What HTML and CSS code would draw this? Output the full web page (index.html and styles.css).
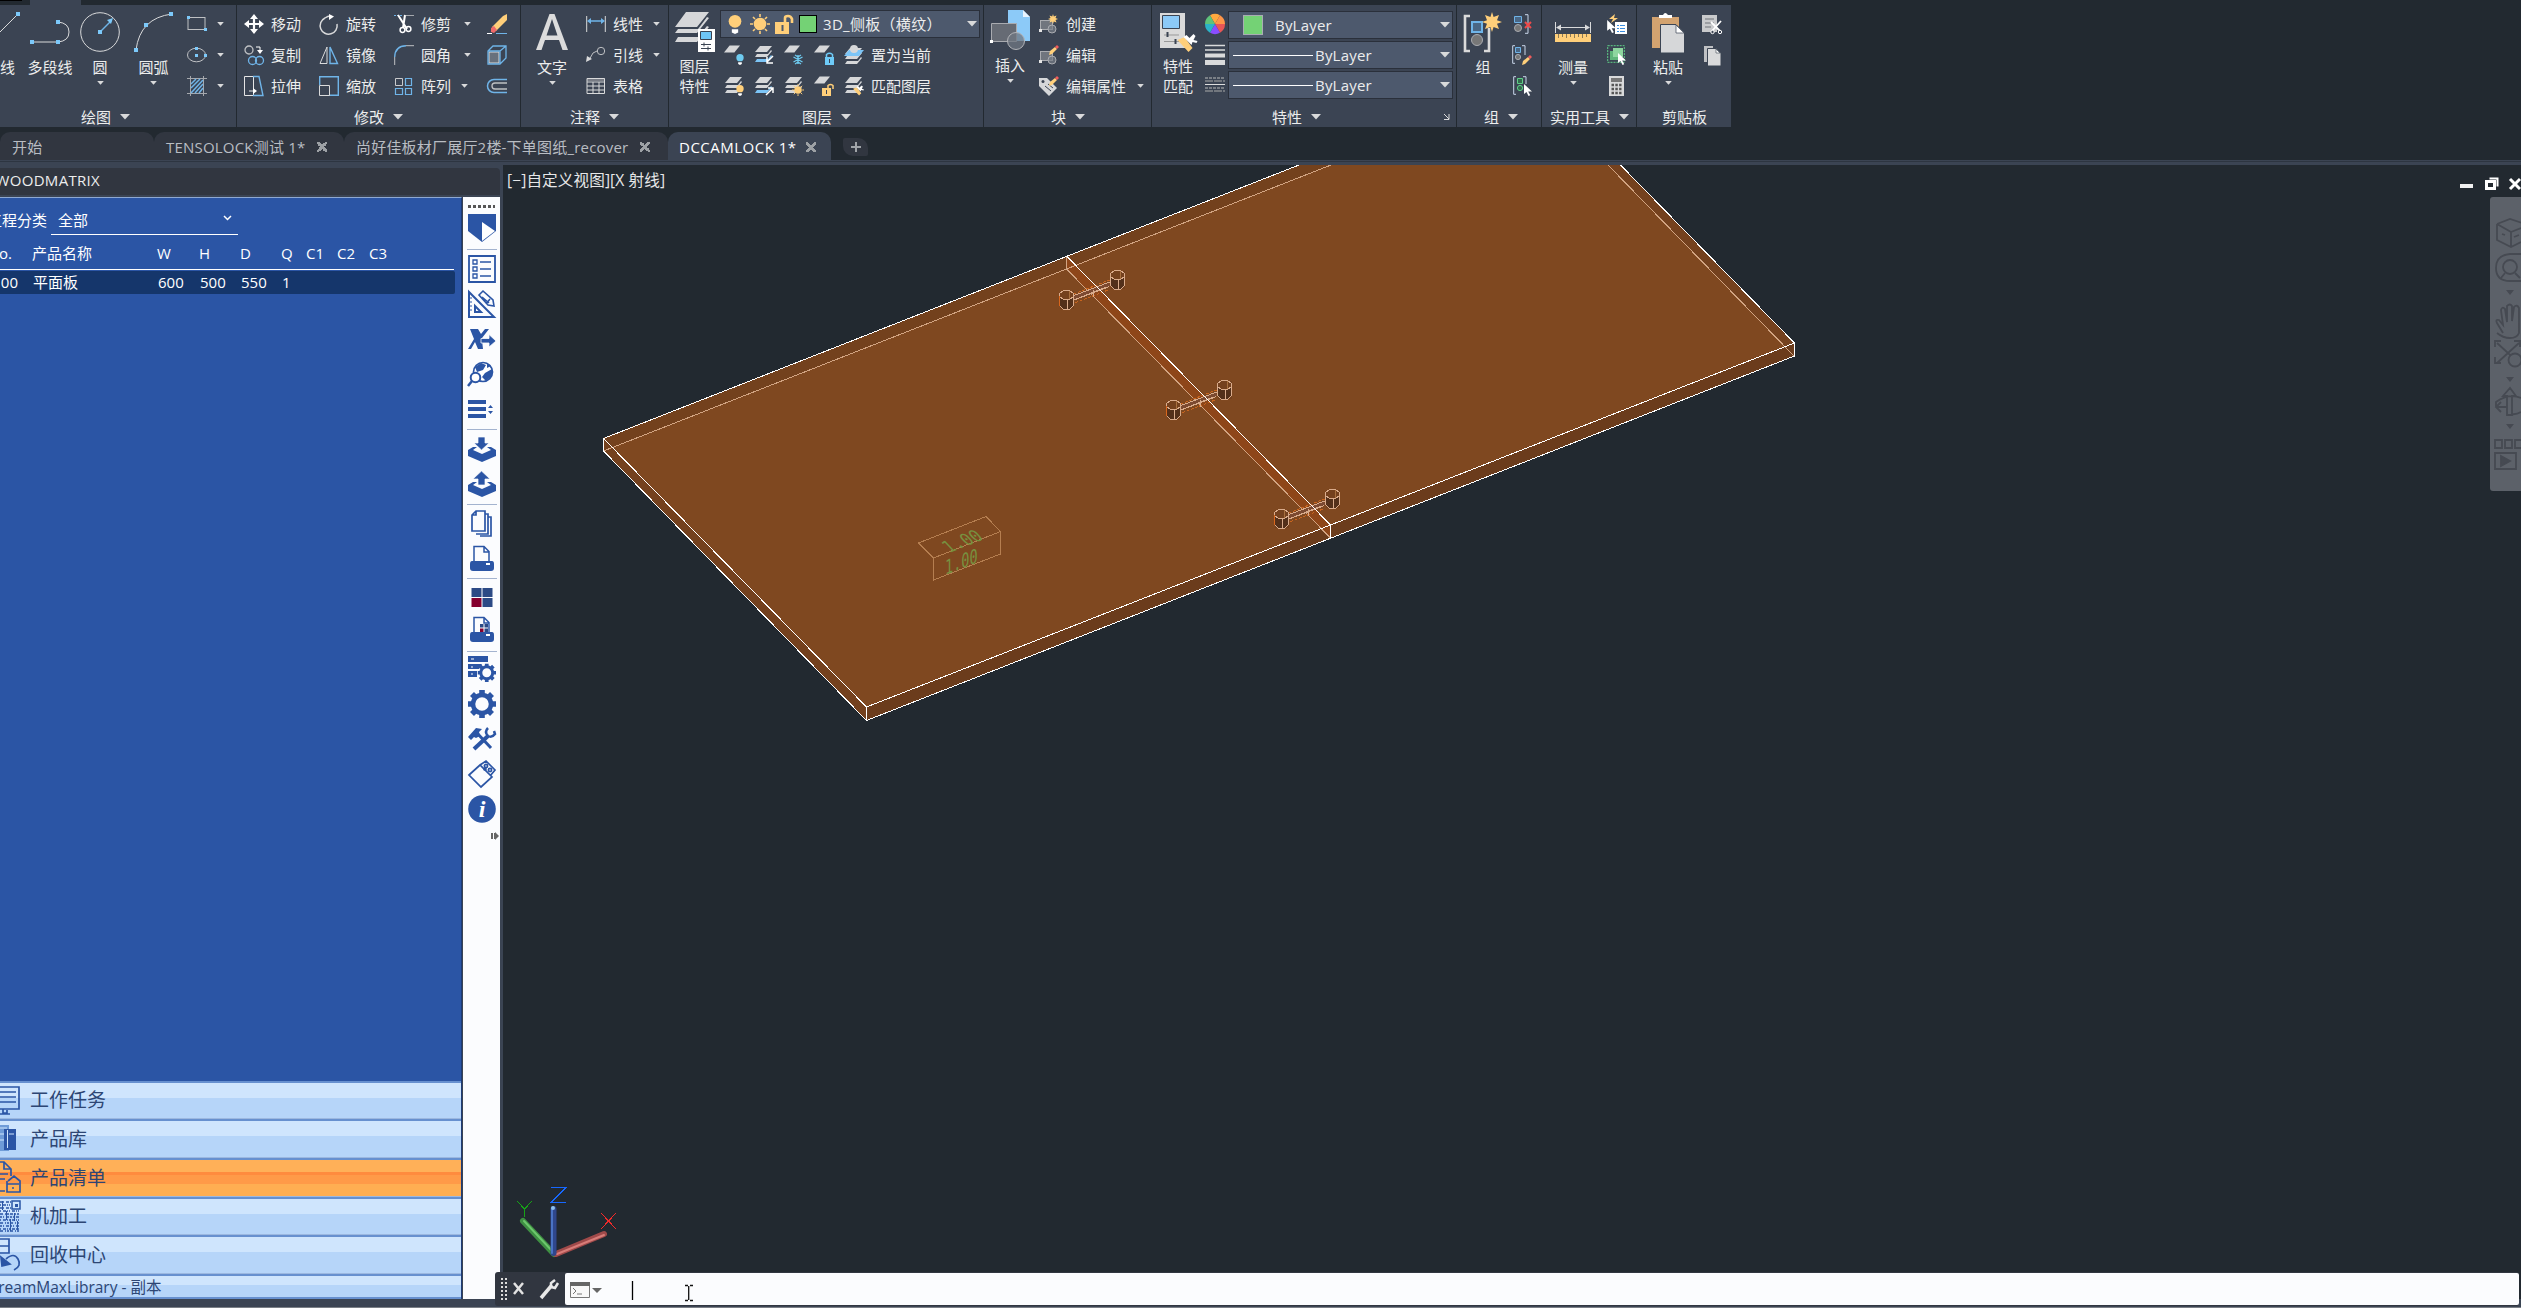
FILE: index.html
```html
<!DOCTYPE html>
<html lang="zh-CN">
<head>
<meta charset="utf-8">
<title>DCCAMLOCK 1*</title>
<link rel="stylesheet" href="styles.css">
</head>
<body>
<svg class="defs" width="0" height="0">
  <defs>
    <symbol id="sheet" viewBox="0 0 20 9"><path d="M7 0h13l-7 9H0z" fill="#d6d7d9"/></symbol>
    <symbol id="stack" viewBox="0 0 20 20"><path d="M6 1h12l-5 6H1z" fill="#d6d7d9"/><path d="M1 12l2-3h11l3-4 1 1-5 6zM1 17l2-3h11l3-4 1 1-5 6z" fill="#d6d7d9"/></symbol>
    <symbol id="stackblue" viewBox="0 0 20 20"><path d="M6 1h12l-5 6H1z" fill="#d6d7d9"/><path d="M1 12l2-3h11l3-4 1 1-5 6z" fill="#d6d7d9"/><path d="M1 17l2-3h11l3-4 1 1-5 6z" fill="#7cc5f7"/></symbol>
    <symbol id="bulb" viewBox="0 0 8 12"><circle cx="4" cy="4" r="4"/><path d="M2 9h4v2l-2 1-2-1z" fill="#fff"/></symbol>
    <symbol id="sun" viewBox="0 0 20 20"><circle cx="10" cy="10" r="6.3" fill="#ffcf7a"/><path d="M10 0v3M10 17v3M0 10h3M17 10h3M3 3l2 2M15 15l2 2M3 17l2-2M15 5l2-2" stroke="#ffcf7a" stroke-width="1.6"/></symbol>
    <symbol id="star" viewBox="0 0 20 20"><path d="M10 0l1.600 5L17 3l-2 5.200 5 1.800-5 1.800 2 5.200-5.400-2L10 20l-1.600-5L3 17l2-5.200L0 10l5-1.800L3 3l5.400 2z" fill="#ffcf7a"/></symbol>
    <symbol id="pencil" viewBox="0 0 10 10"><path d="M0 10l1-4 5-4 2 2-5 5z" fill="#ffcf7a"/><path d="M6 2l2-2 2 2-2 2z" fill="#ef5b5b"/></symbol>
    <symbol id="cursor" viewBox="0 0 8 12"><path d="M0 0v10l2.500-2 2 4 1.700-.8-2-3.700H8z" fill="#fff"/></symbol>
    <symbol id="shapes" viewBox="0 0 20 20"><rect x="1.500" y="6.500" width="12" height="9" fill="#70757e" stroke="#a9abb0"/><circle cx="13" cy="15" r="4" fill="#777d87" fill-opacity=".7" stroke="#a9abb0"/><path d="M0 15h3v3H0z" fill="#e4e4e4"/></symbol>
    <symbol id="brush" viewBox="0 0 20 18"><path d="M0 6l7-3 8 11-4 4z" fill="#ffcf7a"/><path d="M6 3l3-2 3 3 4-4 2 2-2 4 4 1-1 2-4-1-1 3z" fill="#fff"/></symbol>
    <symbol id="gear" viewBox="0 0 28 28"><circle cx="14" cy="14" r="9" fill="none" stroke="#2b55a5" stroke-width="4.500"/><g stroke="#2b55a5" stroke-width="5.600"><path d="M14 0v5M14 23v5M0 14h5M23 14h5M4 4l4 4M20 20l4 4M4 24l4-4M20 8l4-4"/></g></symbol>
    <symbol id="down" viewBox="0 0 10 6"><path d="M0 0h10L5 5.500z" fill="#d9dadb"/></symbol>
    <symbol id="printer" viewBox="0 0 28 28"><path d="M6 16V1.500h10l5 5V16M16 2v5h5" fill="none" stroke="#2b55a5" stroke-width="1.500"/><path d="M4 16h20q2 0 2 3v4q0 3-3 3H5q-3 0-3-3v-4q0-3 2-3z" fill="#2b55a5"/><path d="M18 18h4v2h-4z" fill="#fff"/></symbol>
    <symbol id="tray" viewBox="0 0 28 28"><path d="M0 15l5-3h4l-4 3 9 4 9-4-4-3h4l5 3v6l-14 6-14-6z" fill="#2b55a5"/></symbol>
    <symbol id="dowel" viewBox="0 -2 70 44">
      <path d="M15 22.500l36-14M17 31l34-13" stroke="#c8641e" stroke-width="1" stroke-dasharray="3 1.500"/>
      <path d="M13 27.500l38-15" stroke="#7c4a31" stroke-width="4"/>
      <path d="M13 25l38-14.500M13 29.500l38-14.500M34.500 18v7M18 27.500l30-12" stroke="#d9ab8b" stroke-width="1"/>
      <g id="cyl"><path d="M1 19h14v18H1z" fill="#74411e"/><path d="M1 26l4 2h6l4-2v8l-4 4H5l-4-3z" fill="#53301a"/><path d="M1 22l4-3h6l4 3v12l-4 4H5l-4-4zM1 25l4 3h6l4-3M8.500 28v10" fill="none" stroke="#d9ab8b"/><path d="M10.500 19v8" stroke="#a8703f"/></g>
      <use href="#cyl" x="51" y="-20"/><path d="M.5 24v10" stroke="#d9661c"/>
    </symbol>
  </defs>
</svg>

<div class="app">
  <header class="strip"><span class="strip-dark"></span><span class="strip-tab"></span></header>

  <nav class="ribbon">
    <section class="panel draw">
      <div class="tools">
        <div class="big b-line"><svg width="40" height="40"><path d="M6 34L38 2" stroke="#d9dadb"/><path d="M36 0h4v4h-4z" fill="#7cc9fa"/></svg><span>直线</span></div>
        <div class="big b-poly"><svg width="40" height="40"><path d="M2 30h26q11-1 11-10T28 10" fill="none" stroke="#d9dadb"/><path d="M0 28h4v4H0zM26 28h4v4h-4zM26 8h4v4h-4z" fill="#7cc9fa"/></svg><span>多段线</span></div>
        <div class="big b-circle"><svg width="40" height="40"><circle cx="20" cy="20" r="19.300" fill="none" stroke="#d9dadb"/><path d="M20 20l11-11" stroke="#6fb4e8" stroke-width="1.500"/><path d="M27 8l6-2-2 6zM18 18h4v4h-4z" fill="#7cc9fa"/></svg><span>圆</span><svg class="arr" width="7" height="4"><use href="#down"/></svg></div>
        <div class="big b-arc"><svg width="40" height="40"><path d="M2 38Q6 6 38 2" fill="none" stroke="#d9dadb"/><path d="M0 36h4v4H0zM10 11h4v4h-4zM35 0h4v4h-4z" fill="#7cc9fa"/></svg><span>圆弧</span><svg class="arr" width="7" height="4"><use href="#down"/></svg></div>
        <div class="col c-small">
          <div class="tool"><svg width="20" height="20"><rect x="1" y="3.500" width="17" height="12" fill="none" stroke="#bfc1c4"/><path d="M0 2h3v3H0zM17 14h3v3h-3z" fill="#7cc9fa"/></svg><svg class="arr" width="7" height="4"><use href="#down"/></svg></div>
          <div class="tool"><svg width="20" height="20"><ellipse cx="9.500" cy="10" rx="9" ry="6.800" fill="none" stroke="#bfc1c4"/><path d="M8 2h3v3H8zM8 9h3v3H8zM17 9h3v3h-3z" fill="#7cc9fa"/></svg><svg class="arr" width="7" height="4"><use href="#down"/></svg></div>
          <div class="tool"><svg width="20" height="20"><path d="M3.500 0v20M16.500 0v20M0 2.500h20M0 17.500h20" stroke="#a5a8ad"/><path d="M4 8l5-5M4 12l9-9M4 17L16 4M8 17l8-9M12 17l4-5" stroke="#6fb4e8" stroke-width="1.500"/></svg><svg class="arr" width="7" height="4"><use href="#down"/></svg></div>
        </div>
      </div>
      <div class="title">绘图<svg width="10" height="6"><use href="#down"/></svg></div>
    </section>

    <section class="panel modify">
      <div class="tools">
        <div class="col w75">
          <div class="tool"><svg width="20" height="20"><path d="M10 2v16M2 10h16" stroke="#fff" stroke-width="2.200"/><path d="M10 0l4 5H6zM10 20l4-5H6zM0 10l5-4v8zM20 10l-5-4v8z" fill="#fff"/></svg>移动</div>
          <div class="tool"><svg width="20" height="20"><circle cx="5" cy="5" r="4" fill="none" stroke="#bfc1c4" stroke-width="1.300"/><path d="M12 2h4v4" fill="none" stroke="#fff"/><path d="M13 5h6l-3 4z" fill="#fff"/><circle cx="8.500" cy="15.500" r="4" fill="none" stroke="#6fb4e8" stroke-width="1.300"/><circle cx="15.500" cy="15.500" r="4" fill="none" stroke="#6fb4e8" stroke-width="1.300"/></svg>复制</div>
          <div class="tool"><svg width="20" height="20"><path d="M9.500 .5h-9v19h9zM5 15h5" fill="none" stroke="#e4e4e4"/><path d="M9 12l4 3-4 3z" fill="#fff"/><path d="M9 .5h6l4 19H9" fill="none" stroke="#6fb4e8" stroke-width="1.400"/></svg>拉伸</div>
        </div>
        <div class="col w75">
          <div class="tool"><svg width="20" height="20"><path d="M6 4a8.500 8.500 0 1 0 12 6M6 4q3-2 5-2" fill="none" stroke="#d9dadb" stroke-width="1.500"/><path d="M10 0l5 2.500L10 6z" fill="#fff"/></svg>旋转</div>
          <div class="tool"><svg width="20" height="20"><path d="M8 2v16.500H1z" fill="none" stroke="#d9dadb"/><path d="M11 2v16.500h7.500z" fill="none" stroke="#6fb4e8" stroke-width="1.400"/></svg>镜像</div>
          <div class="tool"><svg width="20" height="20"><path d="M.7 9V.7h18.600v18.600H10" fill="none" stroke="#6fb4e8" stroke-width="1.400"/><path d="M.5 9.500h10v10H.5z" fill="none" stroke="#d9dadb"/></svg>缩放</div>
        </div>
        <div class="col w93">
          <div class="tool"><svg width="20" height="20"><path d="M0 1.500h9" stroke="#6fb4e8" stroke-dasharray="2 1"/><path d="M12 1.500h8" stroke="#a5a8ad"/><path d="M4 1l9 14M11 1L9 14" stroke="#fff" stroke-width="2"/><circle cx="8.500" cy="16" r="2.400" fill="none" stroke="#fff" stroke-width="1.500"/><circle cx="14.500" cy="15" r="2.400" fill="none" stroke="#fff" stroke-width="1.500"/></svg>修剪<svg class="arr gap13" width="7" height="4"><use href="#down"/></svg></div>
          <div class="tool"><svg width="20" height="20"><path d="M.7 12Q1 1 12 .7" fill="none" stroke="#6fb4e8" stroke-width="1.400"/><path d="M.7 12v8M12 .7h8" stroke="#bfc1c4"/></svg>圆角<svg class="arr gap13" width="7" height="4"><use href="#down"/></svg></div>
          <div class="tool"><svg width="20" height="20" fill="none"><path d="M1.500 2.500h7v7h-7z" stroke="#c9cacc"/><path d="M11.500 2.500h6v7h-6zM1.500 12.500h7v6h-7zM11.500 12.500h6v6h-6z" stroke="#6fb4e8" stroke-width="1.200"/></svg>阵列<svg class="arr gap9" width="7" height="4"><use href="#down"/></svg></div>
        </div>
        <div class="col">
          <div class="tool"><svg width="20" height="20"><path d="M5 13L16 2l4-2v6L9 17z" fill="#ffcf7a"/><path d="M4 14l3-2 3 4-3 3-3-1z" fill="#ef6a6a"/><path d="M0 19.500h5" stroke="#fff"/><path d="M9 19.500h11" stroke="#6fb4e8"/></svg></div>
          <div class="tool"><svg width="20" height="20"><path d="M2 7h10v11H2z" fill="#68717d" stroke="#d9dadb"/><path d="M1 6l5-5h13v12l-6 6H1zM1 6h12v13M13 6l6-5" fill="none" stroke="#6fb4e8" stroke-width="1.300"/></svg></div>
          <div class="tool"><svg width="20" height="20" fill="none"><path d="M20 3.500H7a6.500 6.500 0 0 0 0 13h13" stroke="#6fb4e8" stroke-width="1.500"/><path d="M20 7H8a3 3 0 0 0 0 6h12" stroke="#bfc1c4" stroke-width="1.300"/></svg></div>
        </div>
      </div>
      <div class="title">修改<svg width="10" height="6"><use href="#down"/></svg></div>
    </section>

    <section class="panel annotate">
      <div class="tools">
        <div class="big w62"><svg width="40" height="40"><path d="M4 38L17.500 2h5L36 38h-5.500l-3.500-10H13L9.500 38zM14.500 23.500h11L20 7z" fill="#dcdcdc"/></svg><span>文字</span><svg class="arr" width="7" height="4"><use href="#down"/></svg></div>
        <div class="col ml3">
          <div class="tool"><svg width="20" height="20"><path d="M.7 2v16M19.300 2v16" stroke="#d9dadb"/><path d="M3 7h14" stroke="#6fb4e8" stroke-width="1.500"/><path d="M1 7l4-3v6zM19 7l-4-3v6z" fill="#6fb4e8"/></svg>线性<svg class="arr gap10" width="7" height="4"><use href="#down"/></svg></div>
          <div class="tool"><svg width="20" height="20"><circle cx="15" cy="6" r="3.700" fill="none" stroke="#bfc1c4"/><path d="M11 6L7 8 3 15" fill="none" stroke="#bfc1c4"/><path d="M0 17l1-6 5 3z" fill="#d9dadb"/></svg>引线<svg class="arr gap10" width="7" height="4"><use href="#down"/></svg></div>
          <div class="tool"><svg width="20" height="20"><path d="M1 2h18v3H1z" fill="#777b84"/><path d="M1 2.500h17.500v15H1zM1 6h18M1 10h18M1 14h18M7 6v12M13 6v12" fill="none" stroke="#d9dadb"/></svg>表格</div>
        </div>
      </div>
      <div class="title">注释<svg width="10" height="6"><use href="#down"/></svg></div>
    </section>

    <section class="panel layers">
      <div class="tools">
        <div class="big two w50"><svg width="40" height="40"><path d="M11 0h23L22 15H0zM3 17l-3 4h22l12-15-2-1-9 12zM3 25l-3 5h22l12-15-2-1-9 11z" fill="#d6d7d9"/><path d="M23 17h17v23H23z" fill="#fff"/><path d="M25.500 19.500h11v8h-11z" fill="#6ec6f7" stroke="#3b4453"/><path d="M26 32.500h10M26 36.500h10M29 30.500v4M33 34.500v4" stroke="#3b4453"/></svg><span>图层<br>特性</span></div>
        <div class="layer-main">
          <div class="combo layer-combo">
            <svg class="i-bulb" width="14" height="19" fill="#ffcf7a"><use href="#bulb"/></svg>
            <svg class="i-sun" width="20" height="20"><use href="#sun"/></svg>
            <svg class="i-lock" width="18" height="19"><path d="M0 7h14v12H0z" fill="#ffcf7a"/><path d="M10 8V3q0-2 3-2t4 3v4" fill="none" stroke="#ffcf7a" stroke-width="2.600"/><path d="M6.500 10h2v6h-2z" fill="#4d596d"/></svg>
            <i class="swatch"></i><span class="layer-name">3D_侧板（横纹）</span><svg class="end" width="10" height="6"><use href="#down"/></svg>
          </div>
          <div class="tool layer-row">
            <svg width="20" height="20"><use href="#sheet" width="16" height="8"/><g fill="#6ecbf0"><use href="#bulb" x="12" y="9" width="8" height="11"/></g></svg>
            <svg width="20" height="20"><use href="#stackblue"/><path d="M19 11l-6 6m0-5v6h6" stroke="#fff" stroke-width="1.500" fill="none"/></svg>
            <svg width="20" height="20"><use href="#sheet" width="16" height="8"/><path d="M14 10v9M9.500 12l9 5M9.500 17l9-5M11 10l3 2 3-2M11 19l3-2 3 2" stroke="#6ecbf0" fill="none" stroke-width="1.300"/></svg>
            <svg width="20" height="20"><use href="#sheet" width="16" height="8"/><path d="M11 12h9v8h-9z" fill="#6ecbf8"/><path d="M12.500 12V9.500q3-2.500 6 0V12" fill="none" stroke="#6ecbf8" stroke-width="1.500"/><path d="M15 14h1v4h-1z" fill="#3b4453"/></svg>
            <svg width="20" height="20"><use href="#stack" y="2"/><path d="M5 5h15l-5 6H0z" fill="#7cc5f7"/><circle cx="10" cy="4" r="4" fill="#d6d7d9"/></svg>
            <span>置为当前</span>
          </div>
          <div class="tool layer-row">
            <svg width="20" height="20"><use href="#stack"/><g fill="#ffcf7a"><use href="#bulb" x="12" y="9" width="8" height="11"/></g></svg>
            <svg width="20" height="20"><use href="#stackblue"/><path d="M12 19l7-7m-5 0h5v5" stroke="#fff" stroke-width="1.500" fill="none"/></svg>
            <svg width="20" height="20"><use href="#stack"/><use href="#sun" x="8" y="8" width="12" height="12"/></svg>
            <svg width="20" height="20"><use href="#sheet" width="16" height="8"/><path d="M8 12h9v8H8z" fill="#ffcf7a"/><path d="M14 12V9.500q2.500-2 5 0V13" fill="none" stroke="#ffcf7a" stroke-width="1.500"/><path d="M12 14h1v4h-1z" fill="#3b4453"/></svg>
            <svg width="20" height="20"><use href="#stack"/><use href="#brush" x="9" y="9" width="11" height="11"/></svg>
            <span>匹配图层</span>
          </div>
        </div>
      </div>
      <div class="title">图层<svg width="10" height="6"><use href="#down"/></svg></div>
    </section>

    <section class="panel block">
      <div class="tools">
        <div class="big up w52"><svg width="40" height="40"><path d="M18 0h15l7 7v24H18z" fill="#8ccaf8"/><path d="M33 0l7 7h-7z" fill="#e8f4ff"/><path d="M1.500 13.500h25v18h-25z" fill="#666b74" stroke="#a9abb0"/><circle cx="26" cy="31" r="8.500" fill="#707782" fill-opacity=".75" stroke="#b2b4b8"/><path d="M0 30h3v3H0z" fill="#fff"/></svg><span>插入</span><svg class="arr" width="7" height="4"><use href="#down"/></svg></div>
        <div class="col ml3">
          <div class="tool"><svg width="20" height="20"><use href="#shapes"/><use href="#star" x="9" y="0" width="10" height="10"/></svg>创建</div>
          <div class="tool"><svg width="20" height="20"><use href="#shapes"/><use href="#pencil" x="10" y="0" width="10" height="10"/></svg>编辑</div>
          <div class="tool"><svg width="20" height="20"><path d="M0 2h8l10 10-8 8L0 10z" fill="#d6d7d9"/><circle cx="4" cy="5.500" r="1.500" fill="#3b4453"/><path d="M6 10l6 5M9 8l5 4" stroke="#3b4453"/><use href="#pencil" x="10" y="0" width="10" height="10"/></svg>编辑属性<svg class="arr gap11" width="7" height="4"><use href="#down"/></svg></div>
        </div>
      </div>
      <div class="title">块<svg width="10" height="6"><use href="#down"/></svg></div>
    </section>

    <section class="panel props">
      <div class="tools">
        <div class="big two w52"><svg width="40" height="40"><path d="M2 1h25v35H2z" fill="#dadada"/><path d="M4.500 3.500h17v13h-17z" fill="#8ccaf8" stroke="#3b4453"/><path d="M6 23h15M6 29.500h15" stroke="#999"/><path d="M9.500 20v5M17.500 27v5" stroke="#3b4453" stroke-width="2"/><use href="#brush" x="19" y="22" width="21" height="18"/></svg><span>特性<br>匹配</span></div>
        <div class="col ml1">
          <div class="tool"><svg width="20" height="20" viewBox="-10 -10 20 20"><path d="M0 0L-5-8.700A10 10 0 0 1 5-8.700z" fill="#ffa83e"/><path d="M0 0L5-8.700A10 10 0 0 1 10 0z" fill="#ff9548"/><path d="M0 0h10A10 10 0 0 1 5 8.700z" fill="#e85656"/><path d="M0 0l5 8.700a10 10 0 0 1-10 0z" fill="#8a4dff"/><path d="M0 0l-5 8.700A10 10 0 0 1-10 0z" fill="#2bb3c8"/><path d="M0 0h-10A10 10 0 0 1-5-8.700z" fill="#5fc27a"/></svg></div>
          <div class="tool"><svg width="20" height="20"><path d="M0 .5h20M0 5h20" stroke="#d9dadb" stroke-width="1.500"/><path d="M0 10.500h20" stroke="#d9dadb" stroke-width="4"/><path d="M0 17.500h20" stroke="#d9dadb" stroke-width="5"/></svg></div>
          <div class="tool"><svg width="20" height="20"><path d="M0 2h20M0 12h20" stroke="#bbb" stroke-dasharray="3 1"/><path d="M0 5h20M0 15h20" stroke="#aaa" stroke-dasharray="8 1"/><path d="M0 8.500h20" stroke="#ddd"/></svg></div>
        </div>
        <div class="combos">
          <div class="combo"><i class="swatch big-swatch"></i><span>ByLayer</span><svg class="end" width="10" height="6"><use href="#down"/></svg></div>
          <div class="combo"><i class="rule"></i><span>ByLayer</span><svg class="end" width="10" height="6"><use href="#down"/></svg></div>
          <div class="combo"><i class="rule"></i><span>ByLayer</span><svg class="end" width="10" height="6"><use href="#down"/></svg></div>
        </div>
      </div>
      <div class="title">特性<svg width="10" height="6"><use href="#down"/></svg><svg class="launcher" width="7" height="7"><path d="M1 1l5 5M6 1v5.500H1" fill="none" stroke="#d9dadb"/></svg></div>
    </section>

    <section class="panel group">
      <div class="tools">
        <div class="big w52"><svg width="40" height="40"><path d="M7 4H2v35h5M21 39h5V16" fill="none" stroke="#dadada" stroke-width="2.600"/><path d="M9 10h10v10H9z" fill="#4a6785" stroke="#6fb4e8" stroke-width="2"/><circle cx="14" cy="28" r="5.500" fill="#777" stroke="#a9abb0"/><use href="#star" x="19" y="0" width="20" height="20"/></svg><span>组</span></div>
        <div class="col ml3">
          <div class="tool"><svg width="20" height="20"><path d="M13 .7h3v18.600h-3" fill="none" stroke="#c9d6ea"/><path d="M2.500 2.500h7v6h-7z" fill="#4a6785" stroke="#6fb4e8"/><circle cx="6" cy="14" r="3.500" fill="#777" stroke="#a9abb0"/><path d="M13 8l6 6M19 8l-6 6" stroke="#ef4a4a" stroke-width="2"/></svg></div>
          <div class="tool"><svg width="20" height="20"><path d="M3 .7H.7v17.600H3M10 .7h3V10" fill="none" stroke="#c9d6ea"/><path d="M3.500 2.500h5v5h-5z" fill="#4a6785" stroke="#6fb4e8"/><circle cx="6" cy="12" r="2.600" fill="#777" stroke="#a9abb0"/><use href="#pencil" x="10" y="10" width="10" height="10"/></svg></div>
          <div class="tool"><svg width="20" height="20"><path d="M4 .7H1.700v17.600H4M11 .7h3V8" fill="none" stroke="#c9d6ea"/><path d="M5.500 2.500h5v5h-5z" fill="#356b4f" stroke="#5fcf88"/><circle cx="8" cy="12" r="2.600" fill="#356b4f" stroke="#5fcf88"/><use href="#cursor" x="12" y="8" width="8" height="12"/></svg></div>
        </div>
      </div>
      <div class="title">组<svg width="10" height="6"><use href="#down"/></svg></div>
    </section>

    <section class="panel utils">
      <div class="tools">
        <div class="big w62"><svg width="40" height="40"><path d="M2.500 10v11M37.500 10v11M4 15.500h32" stroke="#d9dadb"/><path d="M3 15.500l5-3v6zM37 15.500l-5-3v6z" fill="#d9dadb"/><path d="M2 22h36v8H2z" fill="#ffcf7a"/><path d="M5.500 22v4M9.500 22v3M13.500 22v4M17.500 22v3M21.500 22v4M25.500 22v3M29.500 22v4M33.500 22v3" stroke="#8c7a55"/></svg><span>测量</span><svg class="arr" width="7" height="4"><use href="#down"/></svg></div>
        <div class="col ml3">
          <div class="tool"><svg width="20" height="20"><path d="M8 0L2 5h4L4 9l7-5H7z" fill="#ffcf7a"/><path d="M8 8h12v12H8z" fill="#fff"/><path d="M10 11.500h2M13 11.500h5M10 14.500h2M13 14.500h5M10 17.500h2M13 17.500h5" stroke="#3b8ee0"/><use href="#cursor" x="0" y="6" width="9" height="13"/></svg></div>
          <div class="tool"><svg width="20" height="20"><path d="M.7.700h16.600v16.600H.7z" fill="none" stroke="#5fcf88" stroke-dasharray="2 1"/><path d="M3 6h9v9H3z" fill="#5fb57a"/><path d="M6 3h10v9H6z" fill="#8ed69f"/><use href="#cursor" x="11" y="8" width="8" height="12"/></svg></div>
          <div class="tool"><svg width="20" height="20"><path d="M2 0h15v20H2z" fill="#d9dadb"/><path d="M4 2h11v4H4z" fill="#777"/><path d="M4.500 9h10M4.500 13h10M4.500 17h10" stroke="#555" stroke-width="2.400" stroke-dasharray="2.500 1.300"/></svg></div>
        </div>
      </div>
      <div class="title">实用工具<svg width="10" height="6"><use href="#down"/></svg></div>
    </section>

    <section class="panel clip">
      <div class="tools">
        <div class="big w62"><svg width="40" height="40"><path d="M4 5h27v31H4z" fill="#d3a370"/><path d="M11 6V3h4q2-4 5 0h4v3z" fill="#fff"/><path d="M12.500 12.500H28l8.500 8.500v20h-24z" fill="#d6d7d9" stroke="#3b4453"/><path d="M28 13l8 8h-8z" fill="#fff" stroke="#3b4453" stroke-width=".7"/></svg><span>粘贴</span><svg class="arr" width="7" height="4"><use href="#down"/></svg></div>
        <div class="col ml3">
          <div class="tool"><svg width="20" height="20"><path d="M0 1h15v17H0z" fill="#c9cacc"/><path d="M3 5h9M3 9h9M3 13h6" stroke="#6e7279"/><path d="M9 8l9 9M19 7l-9 10" stroke="#fff" stroke-width="1.800"/><circle cx="10.500" cy="18" r="1.700" fill="#3b4453" stroke="#fff"/><circle cx="18" cy="18" r="1.700" fill="#3b4453" stroke="#fff"/></svg></div>
          <div class="tool"><svg width="20" height="20"><path d="M2 1h9v16H2z" fill="#bfc1c4"/><path d="M5.500 3.500H14l5 5V21H5.500z" fill="#d9dadb" stroke="#3b4453"/><path d="M14 4l4 4h-4z" fill="#fff" stroke="#3b4453" stroke-width=".6"/></svg></div>
        </div>
      </div>
      <div class="title">剪贴板</div>
    </section>
  </nav>

  <div class="tabs">
    <div class="tab t1"><span>开始</span></div>
    <div class="tab t2"><span>TENSOLOCK测试 1*</span><b></b></div>
    <div class="tab t3"><span>尚好佳板材厂展厅2楼-下单图纸_recover</span><b></b></div>
    <div class="tab t4 active"><span>DCCAMLOCK 1*</span><b></b></div>
    <div class="plus"></div>
  </div>
  <div class="band"></div>

  <main class="work">
    <aside class="palette">
      <div class="palette-title">WOODMATRIX</div>
      <div class="palette-body">
        <div class="side">
          <div class="filter"><label>工程分类</label><div class="select">全部<svg width="9" height="6"><path d="M1 1l3.500 3.500L8 1" fill="none" stroke="#fff" stroke-width="1.500"/></svg></div></div>
          <div class="row head"><span class="no">No.</span><span>产品名称</span><span>W</span><span>H</span><span>D</span><span>Q</span><span>C1</span><span>C2</span><span>C3</span></div>
          <div class="row item"><span class="no">100</span><span>平面板</span><span>600</span><span>500</span><span>550</span><span>1</span></div>
          <div class="spacer"></div>
          <div class="nav"><svg width="21" height="38" fill="none" stroke="#2b55a5" stroke-width="1.700"><path d="M0 6h19v22H0M0 11h16M0 16h16M0 21h16M3 28v4h4v-3M0 33h10"/></svg>工作任务</div>
          <div class="nav"><svg width="21" height="38"><path d="M0 5h9v26H0z" fill="#6f9cd8"/><path d="M4 9h12v21H4z" fill="#2b55a5"/><path d="M0 8h7M0 14h4M0 20h4M7.500 10v18M9 14h5" stroke="#cfe5fd"/></svg>产品库</div>
          <div class="nav on"><svg width="21" height="38" fill="none" stroke="#2b55a5" stroke-width="1.700"><path d="M0 3h4l7 7v7M4 3v7h7M0 15h8M0 20h5M0 32h5M8 22l6-5 6 5v11H7V22M7 25h12M12 29h2"/></svg>产品清单</div>
          <div class="nav"><svg width="21" height="38"><g stroke="#2b55a5" stroke-width="1.500"><path d="M0 5h11M0 11h11M0 20h20M0 29h20" stroke-dasharray="2 1 1 2 3 1"/><path d="M0 8h11M0 14h20M0 23h20M0 32h20" stroke-dasharray="1 2 3 1 1 1"/><path d="M0 17h20M0 26h20M0 34h20" stroke-dasharray="3 2 1 1 2 1"/><path d="M2.500 4v9M6.500 14v9M14.500 16v8M10.500 22v12M17.500 24v9" stroke-width="1"/></g><path d="M12 4h8v8h-8z" fill="#cfe5fd" stroke="#2b55a5" stroke-width="1.500"/><path d="M15 7h3v3h-3z" fill="#2b55a5"/></svg>机加工</div>
          <div class="nav"><svg width="21" height="38" fill="none" stroke="#2b55a5" stroke-width="1.700"><path d="M0 3h9v14H0M0 10h9M6 23q8-7 12 0t-4 11"/><path d="M1 21l1 9 8-2z" fill="#2b55a5"/></svg>回收中心</div>
          <div class="nav foot"><span>DreamMaxLibrary - 副本</span></div>
        </div>
        <div class="toolbar">
          <div class="grip"></div>
          <svg viewBox="0 0 28 28"><path d="M0 0h28v17L14 28 0 17z" fill="#2b55a5"/><path d="M14 8l13 9-13 10z" fill="#fff"/></svg>
          <hr class="h6">
          <svg viewBox="0 0 28 28"><path d="M1 1h26v26H1z" fill="none" stroke="#2b55a5" stroke-width="1.800"/><path d="M5 5h4v4H5zM5 12h4v4H5zM5 19h4v4H5z" fill="none" stroke="#2b55a5" stroke-width="1.300"/><path d="M12 7h11M12 14h11M12 21h11" stroke="#2b55a5" stroke-width="1.600"/></svg>
          <svg viewBox="0 0 28 28"><path d="M1 2v25h25zM7 16v6h6z" fill="none" stroke="#2b55a5" stroke-width="2"/><path d="M2 8h2M2 12h2M2 16h2M2 20h2" stroke="#2b55a5"/><path d="M11 5l4-4 10 9 1 6-6-1zM22 9l-4 5M14 7l7 6" fill="none" stroke="#2b55a5" stroke-width="1.600"/></svg>
          <svg viewBox="0 0 28 28"><path d="M2 4h8l3 5 4-5h4l-7 9v2l1 9h-5l-3-7-4 7H0l6-10z" fill="#2b55a5"/><path d="M13 13.500h8v-4l7 6.500-7 6v-4h-8z" fill="#2b55a5" stroke="#fbfcfe" stroke-width=".8"/></svg>
          <svg viewBox="0 0 28 28"><circle cx="15" cy="12" r="9.500" fill="#fff" stroke="#2b55a5" stroke-width="1.700"/><path d="M7 7l6-4 5 2-3 5-6 2zM17 13l7-4v7l-6 5-4-4zM19 3l4 3-4 2z" fill="#2b55a5"/><circle cx="7.500" cy="17.500" r="4.800" fill="#fff" stroke="#2b55a5" stroke-width="2"/><path d="M4 21l-4 5" stroke="#2b55a5" stroke-width="2.500"/></svg>
          <svg viewBox="0 0 28 28"><path d="M0 5h18v4H0zM0 12h18v4H0zM0 19h18v4H0z" fill="#2b55a5"/><path d="M20 13l2.500-3 2.500 3zM20 16l2.500 3 2.500-3z" fill="#2b55a5"/></svg>
          <hr class="h5">
          <svg viewBox="0 0 28 28"><use href="#tray"/><path d="M10 2h7v6h4l-7.500 7L6 8h4z" fill="#2b55a5" stroke="#fbfcfe" stroke-width=".7"/></svg>
          <svg viewBox="0 0 28 28"><use href="#tray"/><path d="M10 15h7V9h5l-8.500-8L5 9h5z" fill="#2b55a5" stroke="#fbfcfe" stroke-width=".7"/></svg>
          <hr class="h5">
          <svg viewBox="0 0 28 28" fill="none" stroke="#2b55a5" stroke-width="1.700"><path d="M8 1h9v20H4V5zM8 1v4H4M17 4h3v20H8M20 7h3v19H12"/></svg>
          <svg viewBox="0 0 28 28"><use href="#printer"/></svg>
          <hr class="h3">
          <svg viewBox="0 0 28 28"><path d="M3.500 5h10v9h-10zM14.500 5h10v9h-10zM14.500 15h10v9h-10z" fill="#2c4a85"/><path d="M3.500 15h10v9h-10z" fill="#85002e"/></svg>
          <svg class="lift" viewBox="0 0 28 28"><use href="#printer"/><path d="M12 8h3.500v3.500H12zM16.500 8H20v3.500h-3.500zM16.500 12.500H20V16h-3.500z" fill="#2c4a85"/><path d="M12 12.500h3.500V16H12z" fill="#85002e"/></svg>
          <hr class="h2">
          <svg viewBox="0 0 28 28"><path d="M0 1h20v6H0zM0 9h14l-3 5H0zM0 16h9v6H0z" fill="#2b55a5"/><path d="M3 4h3M3 12h2M3 19h2" stroke="#fff"/><use href="#gear" x="9.500" y="8.500" width="18.500" height="18.500"/></svg>
          <svg viewBox="0 0 28 28"><use href="#gear"/></svg>
          <svg viewBox="0 0 28 28"><path d="M6 24L20 11" stroke="#2b55a5" stroke-width="4"/><path d="M20 3q-4 4 0 8 4 2 7-2l-1-3" fill="none" stroke="#2b55a5" stroke-width="2.500"/><path d="M9 8l14 15" stroke="#2b55a5" stroke-width="3"/><path d="M0 12l8-9 6 1-3 3 1 4-4 2-2-1-3 3z" fill="#2b55a5"/></svg>
          <svg viewBox="0 0 28 28" fill="none" stroke="#2b55a5" stroke-width="1.700"><path d="M1 15L12 5l12 12-11 10zM12 5l6-4 9 9-5 6"/><circle cx="18" cy="6" r="1.600"/><circle cx="22" cy="10" r="1.600"/><circle cx="17" cy="9" r="1"/></svg>
          <svg viewBox="0 0 28 28"><circle cx="14" cy="14" r="13.800" fill="#2b55a5"/><text x="14" y="22" text-anchor="middle" class="info">i</text></svg>
          <svg class="more" viewBox="0 0 8 8"><path d="M0 1h2v6H0zM3 1h1v6H3zM4 0l4 4-4 4z" fill="#666"/></svg>
        </div>
      </div>
    </aside>

    <div class="canvas">
      <svg class="model" width="2018" height="1134" viewBox="503 165 2018 1134" shape-rendering="crispEdges">
        <path d="M603 438L1299 165H1620.500L1794 343V356L866 720.500 603 451z" fill="#7f4820"/>
        <path d="M603 438L1299 165H1331L603 451z" fill="#73411d"/>
        <path d="M603 438L866 707V720.500L603 451zM1608 165h12.500L1794 343V356z" fill="#74411e"/>
        <path d="M866 707L1794 343V356L866 720.500z" fill="#6b3c1c"/>
        <path d="M1066.500 256L1330.500 525V538L1066.500 269z" fill="#8e4619"/>
        <g fill="none" stroke="#d2a482"><path d="M603.500 451L1331 165M1066.500 256V269L1330.500 538M1608 165L1794 356"/></g>
        <use href="#dowel" x="1058.500" y="269.500" width="70" height="44"/>
        <use href="#dowel" x="1165.500" y="379.500" width="70" height="44"/>
        <use href="#dowel" x="1273.500" y="488.500" width="70" height="44"/>
        <path d="M1299 165L603.500 438.500V451L866.500 720.500 1794.500 356V343L1620.500 165M603.500 438.500L866.500 707 1794.500 343M866.500 707V720M1066.500 256L1330.500 525V538" fill="none" stroke="#fff"/>
        <path d="M933.500 558L918.500 543 986 516.500 1000.500 531.500 933.500 558V580L1000.500 554V531.500" fill="none" stroke="#b57e50"/>
        <g class="dim"><text transform="matrix(.92 -.36 .82 .86 949 553)">1.00</text><text transform="matrix(.85 -.33 0 1.250 945 575)">1.00</text></g>
        <g shape-rendering="auto" stroke-linecap="round">
          <path d="M554 1254L523 1221" stroke="#3f8f43" stroke-width="6"/><path d="M554 1253L524 1221" stroke="#6cc76c" stroke-width="2"/>
          <path d="M556 1254L604 1234" stroke="#a04a4a" stroke-width="6"/><path d="M557 1254L604 1235" stroke="#d87c78" stroke-width="2"/>
          <path d="M553.500 1253V1209" stroke="#2f478c" stroke-width="6"/><path d="M552 1253V1209" stroke="#4a73c4" stroke-width="2"/><circle cx="553" cy="1208" r="2" fill="#8cc0ee"/>
        </g>
        <path d="M551 1187.500h15L551 1202.500h15" fill="none" stroke="#1768ff"/>
        <path d="M517 1201l7.500 8 7.500-8M524.500 1209v8" fill="none" stroke="#16a316"/>
        <path d="M601 1213l15 16M616 1213l-15 16" stroke="#f02a2a"/>
      </svg>
      <div class="view-label">[−]自定义视图][X 射线]</div>
      <svg class="win" width="61" height="16"><path d="M0 7h13v4H0z" fill="#f0f0f0"/><path d="M29.500 1.500h8v8" fill="none" stroke="#fff" stroke-width="2"/><path d="M26.500 4.500h8v7h-8z" fill="none" stroke="#fff" stroke-width="3"/><path d="M50 2l10 10M60 2L50 12" stroke="#fff" stroke-width="3"/></svg>
      <div class="navbar">
        <svg width="31" height="294" viewBox="2490 197 31 294" fill="none" stroke="#464a52" stroke-width="1.800">
          <path d="M2497 224l13-5 12 4M2497 224v16l14 7 10-5M2497 224l14 8v14M2511 232l10-4M2502 234l3 1M2514 237l5-2"/>
          <path d="M2521 254h-11q-14 1-14 14 0 13 14 13h11"/><circle cx="2510" cy="267" r="7"/><path d="M2505 273l-4 5M2515 273l5 5"/>
          <path d="M2506 290h8l-4 5zM2506 377h8l-4 5zM2506 424h8l-4 5z" fill="#464a52" stroke="none"/>
          <path d="M2503 333l-6-10q-2-4 2-3l4 5-2-15q1-4 4-1l2 13v-16q3-3 5 0v15l2-14q3-3 5 1v25q-2 5-9 5t-13-5"/>
          <path d="M2497 343l22 20M2519 343l-22 20M2495 347v-6h6M2514 341h6v6M2495 357v6h6" /><circle cx="2515" cy="360" r="6.500" fill="#5c6169"/>
          <path d="M2507 415v-19h-4l7-8 6 8h-4v19zM2521 398q-12-5-25 4v5M2497 407h10M2501 402l-5 5 5 5M2521 412q-5 3-10 2"/>
          <path d="M2495 440h7v8h-7zM2505 440h7v8h-7zM2515 440h7v8h-7zM2495 453h21v16h-21z"/><path d="M2501 456l9 5-9 5z" fill="#464a52"/>
        </svg>
      </div>
      <div class="command">
        <svg class="cmd-tools" width="70" height="34"><path d="M6 7h2m2 0h2M6 11h2m2 0h2M6 15h2m2 0h2M6 19h2m2 0h2M6 23h2m2 0h2M6 27h2m2 0h2" stroke="#dcdcdc" stroke-width="2"/><path d="M19 11l9 11M28 11l-9 11" stroke="#e2e2e2" stroke-width="2.500"/><path d="M46 26l11-13" stroke="#e8e8e8" stroke-width="3.500"/><path d="M60 8l-4 3 0 4 4 1 3-5" fill="none" stroke="#e8e8e8" stroke-width="2.500"/></svg>
        <div class="cmd-input"><svg width="130" height="32"><path d="M5.500 9.500h19v15h-19z" fill="#f8f8f8" stroke="#777"/><path d="M5 9h20v4H5z" fill="#666"/><path d="M8 15l3 3-3 3M12 21h5" fill="none" stroke="#777"/><path d="M27 15h10l-5 5z" fill="#666"/><path d="M67.500 8v19" stroke="#000" stroke-width="1.300"/><path d="M120 12.500h3M125 12.500h3M120 27.500h3M125 27.500h3M123.700 13v14" stroke="#111" stroke-width="1.300"/></svg></div>
      </div>
    </div>
  </main>
  <footer class="base"></footer>
</div>
</body>
</html>
```

FILE: styles.css
```css
* { box-sizing: border-box; }
body { margin: 0; background: #222930; overflow: hidden; font: 15px/20px "Open Sans", "Noto Sans CJK SC", sans-serif; color: #eceded; }
svg { display: block; flex: none; overflow: visible; }
.defs { position: absolute; }
.app { width: 2521px; height: 1308px; display: flex; flex-direction: column; overflow: hidden; white-space: nowrap; }

.strip { height: 5px; display: flex; }
.strip-dark { width: 22px; height: 1px; background: #000; margin-right: 8px; }
.strip-tab { width: 51px; background: #3b4453; }

.ribbon { height: 122px; display: flex; }
.panel { background: #3b4453; border-right: 1px solid #222930; display: flex; flex-direction: column; overflow: hidden; flex: none; }
.tools { height: 97px; padding-top: 3px; display: flex; }
.title { height: 25px; padding-top: 4px; display: flex; align-items: center; gap: 9px; }
.draw { width: 237px; } .draw .title { padding-left: 81px; }
.modify { width: 284px; } .modify .tools { padding-left: 7px; } .modify .title { padding-left: 117px; }
.annotate { width: 148px; } .annotate .title { padding-left: 49px; }
.layers { width: 315px; } .layers .title { padding-left: 133px; }
.block { width: 168px; } .block .title { padding-left: 67px; }
.props { width: 305px; } .props .title { padding-left: 120px; }
.group { width: 85px; } .group .title { padding-left: 27px; }
.utils { width: 95px; } .utils .title { padding-left: 8px; }
.clip { width: 94px; border-right: 0; } .clip .title { padding-left: 25px; }
.launcher { margin-left: auto; margin-right: 6px; }

.big { display: flex; flex-direction: column; align-items: center; padding-top: 4px; flex: none; }
.big.up { padding-top: 2px; }
.big span { margin-top: 5px; text-align: center; }
.big .arr { margin-top: 4px; }
.big.two span { margin-top: 4px; }
.w50 { width: 51px; } .w52 { width: 52px; } .w62 { width: 62px; }
.b-line { width: 40px; margin-left: -20px; }
.b-poly { width: 60px; } .b-circle { width: 40px; } .b-arc { width: 67px; }

.col { flex: none; }
.tool { height: 31px; display: flex; align-items: center; gap: 7px; }
.c-small .tool { gap: 10px; }
.w75 { width: 75px; } .w93 { width: 93px; }
.ml1 { margin-left: 1px; } .ml3 { margin-left: 3px; }
.gap13 { margin-left: 6px; } .gap9 { margin-left: 3px; } .gap10 { margin-left: 3px; } .gap11 { margin-left: 4px; }

.combo { height: 28px; background: #4d596d; border: 1px solid #2a303b; display: flex; align-items: center; }
.combo .end { margin-left: auto; margin-right: 2px; }
.layer-main { width: 260px; }
.layer-combo { margin: 2px 0 1px; padding: 0 0 0 7px; }
.layer-name { letter-spacing: .3px; }
.i-sun { margin-left: 8px; } .i-lock { margin-left: 5px; }
.swatch { width: 18px; height: 18px; background: #74d275; border: 1px solid #000; margin: 0 6px 0 6px; }
.layer-row { padding-left: 4px; gap: 10px; }
.layer-row span { margin-left: -3px; }
.combos { width: 225px; margin-left: 3px; padding-top: 3px; display: flex; flex-direction: column; gap: 2px; }
.combos span { letter-spacing: .2px; }
.big-swatch { width: 20px; height: 20px; border-color: #a9adb3; margin: 0 12px 0 14px; }
.rule { width: 80px; height: 1px; background: #fff; margin: 0 2px 0 4px; }

.tabs { height: 33px; padding-top: 5px; display: flex; }
.tab { height: 28px; background: #313640; border-radius: 10px 10px 0 0; display: flex; align-items: center; color: #b9bdc3; padding: 1px 0 0 12px; flex: none; letter-spacing: .2px; }
.t1 { width: 154px; } .t2 { width: 190px; } .t3 { width: 324px; }
.t4 { width: 163px; background: #3b4453; color: #fff; padding-left: 11px; letter-spacing: .5px; }
.tab b { width: 10px; height: 10px; margin-left: auto; margin-right: 17px; background: linear-gradient(45deg, transparent 40%, #9da1a5 40% 60%, transparent 60%), linear-gradient(-45deg, transparent 40%, #9da1a5 40% 60%, transparent 60%); }
.t3 b { margin-right: 18px; }
.t4 b { margin-right: 15px; }
.plus { margin: 6px 0 0 12px; width: 25px; height: 18px; border-radius: 2px 10px 2px 10px; background: linear-gradient(#a0a4a8, #a0a4a8) center/10px 2px no-repeat, linear-gradient(#a0a4a8, #a0a4a8) center/2px 10px no-repeat, #313640; }
.band { height: 5px; background: linear-gradient(#3b4453 1px, #2d3541 1px 2px, #3b4453 2px); }

.work { height: 1134px; display: flex; position: relative; }
.palette { width: 503px; background: #3b4453; padding-top: 3px; flex: none; }
.palette-title { width: 500px; height: 27px; background: #313640; border-radius: 0 4px 0 0; display: flex; justify-content: flex-end; align-items: center; padding: 0 400px 3px 0; letter-spacing: .3px; }
.palette-body { display: flex; margin-top: 2px; height: 1102px; }
.side { width: 462px; background: #2b55a5; border-top: 1px solid #8fa9d2; border-right: 1px solid #1d3c78; display: flex; flex-direction: column; color: #fff; overflow: hidden; flex: none; }
.filter { height: 37px; padding-top: 12px; display: flex; }
.filter label { width: 47px; display: flex; justify-content: flex-end; }
.select { width: 187px; margin-left: 4px; padding: 0 6px 0 7px; height: 25px; border-bottom: 1px solid #fff; display: flex; justify-content: space-between; }
.select svg { margin-top: 5px; }
.row { display: grid; grid-template-columns: 12px 20px 125px 42px 41px 41px 25px 31px 32px 40px; align-items: center; }
.row span:nth-child(2) { grid-column: 3; }
.row .no { display: flex; justify-content: flex-end; }
.head { width: 454px; height: 35px; border-bottom: 1px solid #fff; padding-top: 1px; }
.item { width: 455px; height: 23px; margin-top: 1px; background: #15366b; border-radius: 0 2px 2px 0; padding: 0 0 2px 1px; }
.item .no { width: 17px; }
.spacer { flex: 1; }
.nav { height: 38.700px; border-top: 2px solid #6790cf; border-bottom: 1px solid #9cb8e0; background: linear-gradient(#cfe5fd 42%, #b6d5f9 42%); color: #2d4674; font-size: 19px; display: flex; align-items: center; gap: 9px; flex: none; }
.nav.on { background: linear-gradient(#ffb058 32%, #ff8b3e 32% 42%, #ff9a48 42% 68%, #ffae52 68%); }
.foot { height: 25px; font-size: 15.500px; border-bottom: 2px solid #6790cf; }
.foot span { margin-left: -13px; }

.toolbar { width: 37px; margin-left: 1px; background: #fbfcfe; display: flex; flex-direction: column; align-items: center; }
.toolbar svg { width: 28px; height: 28px; margin-bottom: 7px; overflow: visible; }
.grip { width: 27px; height: 3px; margin: 8px 0 6px; background: repeating-linear-gradient(90deg, #555 0 3px, transparent 3px 5px); }
.toolbar hr { border: 0; margin: -3px 0 3px; width: 30px; flex: none; background: linear-gradient(#a3b3cf, #a3b3cf) center/100% 1px no-repeat; }
.h6 { height: 6px; } .h5 { height: 5px; } .h3 { height: 3px; } .h2 { height: 2px; }
.toolbar .lift { margin-top: -2px; margin-bottom: 9px; }
.toolbar .more { width: 8px; height: 8px; margin: 2px 0 0 26px; }
.info { font: italic bold 24px "Liberation Serif", serif; fill: #fff; }

.canvas { flex: 1; position: relative; background: #222930; }
.view-label { position: absolute; left: 4px; top: 5px; color: #e6e7e8; font-size: 15.600px; letter-spacing: .1px; }
.win { position: absolute; left: 1957px; top: 12px; }
.navbar { position: absolute; left: 1987px; top: 32px; width: 31px; height: 294px; background: #5c6169; border-radius: 3px 0 0 3px; overflow: hidden; }
.command { position: absolute; left: -8px; top: 1107px; width: 2024px; height: 34px; background: #313640; display: flex; border-radius: 3px; z-index: 2; }
.cmd-input { flex: 1; height: 32px; margin-top: 1px; background: #fbfcfe; border-radius: 2px; }
.base { height: 9px; background: #3b4453; border-bottom: 1px solid #7a7f86; }
.dim text { font: 16px "DejaVu Sans Mono", monospace; fill: #77903f; }
```
